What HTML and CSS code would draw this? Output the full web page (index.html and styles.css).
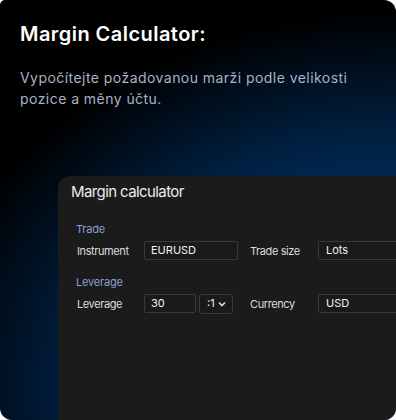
FILE: index.html
```html
<!DOCTYPE html>
<html>
<head>
<meta name="viewport" content="width=device-width, initial-scale=1">
<link rel="stylesheet" href="styles.css">
</head>
<body>

<div class="card">
  <h1>Margin Calculator:</h1>
  <p class="lead">Vypočítejte požadovanou marži podle velikosti pozice a měny účtu.</p>

  <div class="panel">
    <div class="panel-title">Margin calculator</div>

    <div class="section">Trade</div>
    <div class="row">
      <span class="label">Instrument</span>
      <span class="field w-instrument">EURUSD</span>
      <span class="label label-right">Trade size</span>
      <span class="field w-wide">Lots</span>
    </div>

    <div class="section">Leverage</div>
    <div class="row">
      <span class="label">Leverage</span>
      <span class="field w-lev">30</span>
      <span class="field select w-ratio">:1
        <svg width="8" height="6" viewBox="0 0 8 6"><path d="M1 1.5 L4 4.5 L7 1.5" fill="none" stroke="#ddd" stroke-width="1.6"/></svg>
      </span>
      <span class="label label-right gap-cur">Currency</span>
      <span class="field w-wide">USD</span>
    </div>
  </div>
</div>

</body>
</html>
```

FILE: styles.css
```css
* {
  box-sizing: border-box;
}

body {
  margin: 0;
  background: #fff;
  font-family: Inter, "Noto Sans", sans-serif;
}

.card {
  width: 396px;
  height: 420px;
  overflow: hidden;
  border-radius: 5px 12px 12px 12px;
  padding: 22px 0 0 20px;
  background: radial-gradient(ellipse 560px 440px at 100% 92%, #003f7c 0%, #00356c 30%, #001f40 58%, #000 85%);
}

h1 {
  margin: 0;
  font-size: 20px;
  line-height: 24px;
  font-weight: 600;
  color: #fff;
  letter-spacing: 0.45px;
}

.lead {
  margin: 21px 0 0 0;
  width: 350px;
  font-size: 14px;
  line-height: 21px;
  color: #a8b3c5;
  letter-spacing: 0.45px;
}

.panel {
  margin: 67px 0 0 38px;
  width: 360px;
  height: 260px;
  background: #1b1b1b;
  border-radius: 12px 0 0 0;
  padding: 6px 0 0 13px;
}

.panel-title {
  font-size: 15px;
  line-height: 20px;
  color: #ececec;
  font-weight: 400;
  letter-spacing: -0.6px;
}

.section {
  margin: 20px 0 0 5px;
  font-size: 11px;
  line-height: 14px;
  color: #8a9ed8;
  letter-spacing: -0.2px;
}

.section + .row {
  margin-top: 5px;
}

.row + .section {
  margin-top: 15px;
}

.row {
  display: flex;
  align-items: center;
  height: 19px;
  padding-left: 6px;
}

.label {
  width: 67px;
  font-size: 11px;
  color: #dcdcdc;
  letter-spacing: -0.4px;
}

.label-right {
  width: 68px;
  margin-left: 12px;
}

.gap-cur {
  margin-left: 17px;
}

.field {
  height: 19px;
  border: 1px solid #3a3a3a;
  border-radius: 2px;
  background: #1a1a1a;
  font-size: 11px;
  line-height: 17px;
  padding-left: 6px;
  color: #f2f2f2;
}

.w-instrument {
  width: 94px;
}

.w-wide {
  width: 100px;
  padding-left: 7px;
}

.w-lev {
  width: 52px;
}

.select {
  display: flex;
  align-items: center;
  justify-content: space-between;
  margin-left: 3px;
  width: 34px;
  height: 20px;
  padding: 0 6px 0 7px;
}
```
